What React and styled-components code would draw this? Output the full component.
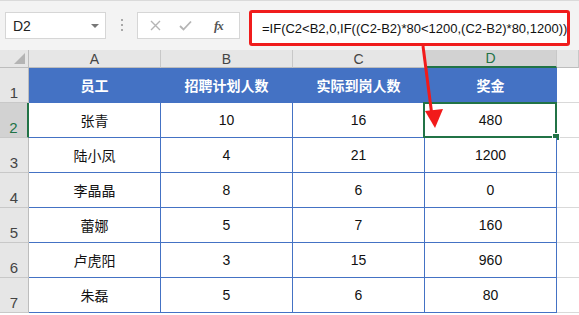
import React from 'react';
import styled, { createGlobalStyle } from 'styled-components';

const GlobalStyle = createGlobalStyle`
  html, body {
    margin: 0;
    padding: 0;
    background: #fff;
  }
  body {
    font-family: "Liberation Sans", "Noto Sans CJK SC", sans-serif;
  }
`;

const Sheet = styled.div`
  position: relative;
  width: 579px;
  height: 315px;
  overflow: hidden;
  background: #fff;
`;

const FormulaBar = styled.div`
  height: 50px;
  box-sizing: border-box;
  background: #f3f3f3;
  border-top: 1px solid #dadada;
  display: flex;
  align-items: flex-start;
  padding: 9px 0 0 5px;
`;

const NameBox = styled.div`
  flex-shrink: 0;
  margin-top: 2px;
  width: 101px;
  height: 27px;
  box-sizing: border-box;
  background: #fff;
  border: 1px solid #d6d6d6;
  display: flex;
  align-items: center;
  justify-content: space-between;
  padding: 0 6px 0 7px;
  font-size: 14px;
  color: #222;
`;

const DropArrow = styled.span`
  width: 0;
  height: 0;
  border-left: 4px solid transparent;
  border-right: 4px solid transparent;
  border-top: 4px solid #777;
`;

const Grip = styled.div`
  flex-shrink: 0;
  width: 31px;
  height: 29px;
  display: flex;
  flex-direction: column;
  align-items: center;
  justify-content: center;
  gap: 3px;

  span {
    width: 2px;
    height: 2px;
    background: #a8a8a8;
  }
`;

const FnBox = styled.div`
  flex-shrink: 0;
  margin-top: 2px;
  width: 103px;
  height: 27px;
  box-sizing: border-box;
  background: #fff;
  border: 1px solid #d6d6d6;
  display: flex;
  align-items: center;
  padding-left: 12px;
  gap: 18px;
`;

const FxLabel = styled.span`
  font-family: "Liberation Serif", serif;
  font-style: italic;
  font-weight: bold;
  font-size: 13px;
  color: #555;
  margin-left: 4px;
  letter-spacing: -1px;
`;

const FormulaInput = styled.div`
  flex-shrink: 0;
  margin-left: 9px;
  width: 321px;
  height: 36px;
  box-sizing: border-box;
  background: #fff;
  border: 3px solid #f01c1c;
  border-radius: 3px;
  display: flex;
  align-items: center;
  padding-left: 10px;
  overflow: hidden;
  font-size: 13px;
  color: #111;
  white-space: nowrap;
`;

const Grid = styled.div`
  display: grid;
  grid-template-columns: 29px repeat(4, 132px) 1fr;
  grid-template-rows: 18px repeat(7, 35px);
`;

const Corner = styled.div`
  position: relative;
  background: #e6e6e6;
  box-sizing: border-box;
  border-right: 1px solid #bdbdbd;
  border-bottom: 1px solid #bdbdbd;

  &::after {
    content: "";
    position: absolute;
    right: 3px;
    bottom: 3px;
    width: 0;
    height: 0;
    border-left: 11px solid transparent;
    border-bottom: 11px solid #b4b4b4;
  }
`;

const ColHead = styled.div`
  box-sizing: border-box;
  background: ${p => (p.$active ? '#d2d2d2' : '#e6e6e6')};
  color: ${p => (p.$active ? '#217346' : '#444')};
  border-right: 1px solid #c8c8c8;
  border-bottom: ${p => (p.$active ? '2px solid #217346' : '1px solid #bdbdbd')};
  display: flex;
  align-items: center;
  justify-content: center;
  font-size: 14px;
`;

const RowHead = styled.div`
  box-sizing: border-box;
  background: ${p => (p.$active ? '#d2d2d2' : '#e6e6e6')};
  color: ${p => (p.$active ? '#217346' : '#444')};
  border-bottom: 1px solid #c8c8c8;
  border-right: ${p => (p.$active ? '2px solid #217346' : '1px solid #bdbdbd')};
  display: flex;
  align-items: flex-end;
  justify-content: center;
  padding-bottom: 1px;
  font-size: 15px;
`;

const Cell = styled.div`
  position: relative;
  box-sizing: border-box;
  border-right: 1px solid #4472c4;
  border-bottom: 1px solid #4472c4;
  background: ${p => (p.$head ? '#4472c4' : '#fff')};
  color: ${p => (p.$head ? '#fff' : '#111')};
  font-weight: ${p => (p.$head ? 'bold' : 'normal')};
  display: flex;
  align-items: center;
  justify-content: center;
  font-size: 14px;
`;

const Spare = styled.div`
  box-sizing: border-box;
  border-bottom: 1px solid #d9d9d9;
  background: #fff;
`;

const Selection = styled.div`
  position: absolute;
  left: -2px;
  top: -1px;
  right: -1px;
  bottom: -1px;
  border: 2px solid #217346;
  pointer-events: none;

  &::after {
    content: "";
    position: absolute;
    right: -5px;
    bottom: -5px;
    width: 6px;
    height: 6px;
    background: #217346;
    border: 1px solid #fff;
  }
`;

const Arrow = styled.svg`
  position: absolute;
  left: 0;
  top: 0;
  pointer-events: none;
`;

const columns = ['A', 'B', 'C', 'D'];
const header = ['员工', '招聘计划人数', '实际到岗人数', '奖金'];
const rows = [
  ['张青', 10, 16, 480],
  ['陆小凤', 4, 21, 1200],
  ['李晶晶', 8, 6, 0],
  ['蕾娜', 5, 7, 160],
  ['卢虎阳', 3, 15, 960],
  ['朱磊', 5, 6, 80],
];

export default function App() {
  return (
    <Sheet>
      <GlobalStyle />
      <FormulaBar>
        <NameBox>
          D2
          <DropArrow />
        </NameBox>
        <Grip>
          <span />
          <span />
          <span />
        </Grip>
        <FnBox>
          <svg width="11" height="11" viewBox="0 0 11 11">
            <path d="M1 1 L10 10 M10 1 L1 10" stroke="#b5b5b5" strokeWidth="1.4" fill="none" />
          </svg>
          <svg width="13" height="11" viewBox="0 0 13 11">
            <path d="M1 6 L4.5 9.5 L12 1.5" stroke="#b5b5b5" strokeWidth="1.8" fill="none" />
          </svg>
          <FxLabel>fx</FxLabel>
        </FnBox>
        <FormulaInput>=IF(C2&lt;B2,0,IF((C2-B2)*80&lt;1200,(C2-B2)*80,1200))</FormulaInput>
      </FormulaBar>

      <Grid>
        <Corner />
        {columns.map(c => (
          <ColHead key={c} $active={c === 'D'}>{c}</ColHead>
        ))}
        <ColHead />

        <RowHead>1</RowHead>
        {header.map(h => (
          <Cell key={h} $head>{h}</Cell>
        ))}
        <Spare />

        {rows.map((r, i) => (
          <React.Fragment key={r[0]}>
            <RowHead $active={i === 0}>{i + 2}</RowHead>
            {r.map((v, j) => (
              <Cell key={j}>
                {v}
                {i === 0 && j === 3 && <Selection />}
              </Cell>
            ))}
            <Spare />
          </React.Fragment>
        ))}
      </Grid>

      <Arrow width="579" height="315">
        <path d="M423 46 L432 116" stroke="#f21a1a" strokeWidth="3" fill="none" />
        <path d="M425 111 L443 109 L435 128 Z" fill="#f21a1a" />
      </Arrow>
    </Sheet>
  );
}
